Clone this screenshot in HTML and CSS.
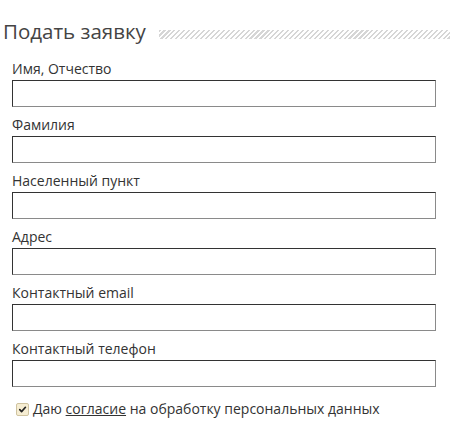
FILE: index.html
```html
<!DOCTYPE html>
<html lang="ru">
<head>
<meta charset="utf-8">
<title>Подать заявку</title>
<link rel="stylesheet" href="styles.css">
</head>
<body>
<div class="page">
  <div class="head">
    <h2 class="title">Подать заявку</h2>
    <div class="stripes"></div>
  </div>
  <form class="form">
    <div class="field"><label class="label">Имя, Отчество</label><input class="input" type="text"></div>
    <div class="field"><label class="label">Фамилия</label><input class="input" type="text"></div>
    <div class="field"><label class="label">Населенный пункт</label><input class="input" type="text"></div>
    <div class="field"><label class="label">Адрес</label><input class="input" type="text"></div>
    <div class="field"><label class="label">Контактный email</label><input class="input" type="text"></div>
    <div class="field"><label class="label">Контактный телефон</label><input class="input" type="text"></div>
    <div class="agree">
      <span class="check"><svg viewBox="0 0 12 12" width="12" height="12"><path d="M3 6.2 L5 8.3 L9.2 3.6" fill="none" stroke="#222" stroke-width="1.8" stroke-linecap="round" stroke-linejoin="round"/></svg></span>
      <span class="agree-text">Даю <span class="link">согласие</span> на обработку персональных данных</span>
    </div>
  </form>
</div>
</body>
</html>
```
FILE: styles.css
```css
html, body {
  margin: 0;
  padding: 0;
  background: #fff;
}
body {
  font-family: "Open Sans", "Noto Sans", sans-serif;
  color: #3a3a3a;
}
.page {
  width: 450px;
  padding-top: 16px;
}
.head {
  display: flex;
  align-items: center;
  padding-left: 3px;
}
.title {
  margin: 0;
  font-size: 20.5px;
  line-height: 30px;
  font-weight: 400;
  color: #444;
  white-space: nowrap;
}
.stripes {
  flex: 1;
  height: 9px;
  margin-left: 13px;
  margin-top: 7px;
  background: repeating-linear-gradient(135deg, #d6d6d6 0 1.5px, #fff 1.5px 3.5px);
}
.form {
  margin: 0;
  padding: 5px 0 0 12px;
  width: 424px;
}
.field {
  padding-top: 9px;
}
.label {
  display: block;
  font-size: 14px;
  line-height: 18px;
  margin-bottom: 2px;
  color: #333;
}
.input {
  display: block;
  box-sizing: border-box;
  width: 424px;
  height: 27px;
  margin: 0;
  padding: 0 4px;
  border: 1px solid;
  border-color: #333 #8a8a8a #8a8a8a #333;
  background: #fff;
  outline: none;
}
.agree {
  display: flex;
  align-items: center;
  margin-top: 13px;
  padding-left: 4px;
  font-size: 14px;
  line-height: 18px;
  color: #333;
}
.check {
  display: flex;
  width: 11px;
  height: 11px;
  border: 1px solid #cfc3a0;
  border-radius: 2px;
  background: #f6edd2;
  margin-right: 4px;
  box-sizing: content-box;
  align-items: center;
  justify-content: center;
}
.check svg {
  width: 11px;
  height: 11px;
}
.link {
  text-decoration: underline;
}
```
